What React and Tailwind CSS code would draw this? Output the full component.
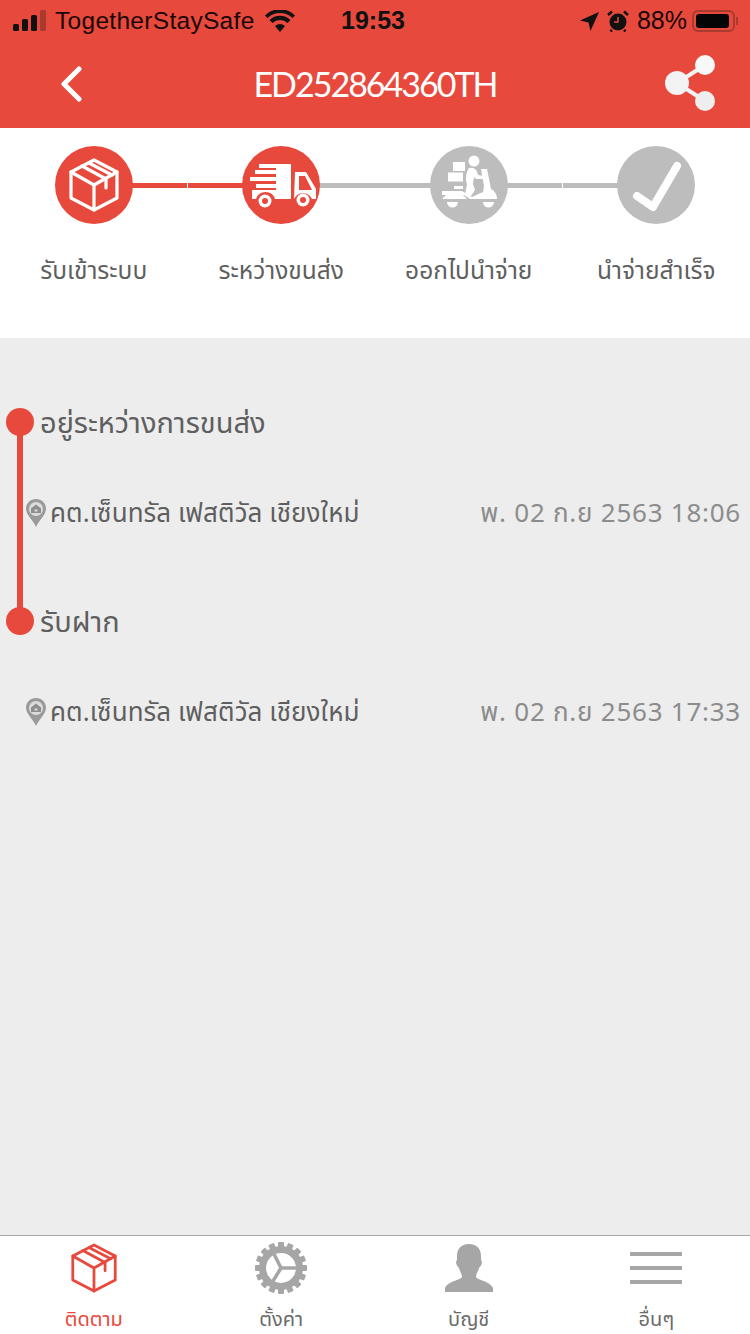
import React from "react";

const RED = "#e8493d";
const GREY = "#bdbdbd";

function BoxIcon({ color, className, sw = 3.2 }) {
  return (
    <svg viewBox="0 0 52 56" className={className} fill="none" stroke={color} strokeWidth={sw} strokeLinejoin="round" strokeLinecap="round">
      <path d="M26 3 L49 15 L49 41 L26 53 L3 41 L3 15 Z" />
      <path d="M3 15 L26 28 L49 15 M26 28 L26 53" />
      <path d="M14 9 L38 22 L38 31 M21 6 L44 18" />
    </svg>
  );
}

function Truck() {
  return (
    <svg viewBox="0 0 78 78" className="w-[78px] h-[78px]">
      <circle cx="39" cy="39" r="39" fill={RED} />
      <g fill="#fff">
        <path d="M17 18 H49 V53 H33 A10 10 0 0 0 14 53 H10 V44 H34 V42 H14 V38 H34 V35 H8 V31 H34 V28 H13 V24 H34 V22 H17 Z" />
        <path d="M53 26 H64 L74 43 V53 H70 A10 10 0 0 0 52 53 Z" />
      </g>
      <path d="M57 30 H63 L70 44 H57 Z" fill={RED} />
      <circle cx="23" cy="55" r="6.5" fill="#fff" />
      <circle cx="23" cy="55" r="3" fill={RED} />
      <circle cx="61" cy="54" r="6.5" fill="#fff" />
      <circle cx="61" cy="54" r="3" fill={RED} />
    </svg>
  );
}

function Scooter() {
  return (
    <svg viewBox="0 0 78 78" className="w-[78px] h-[78px]">
      <circle cx="39" cy="39" r="39" fill={GREY} />
      <g fill="#fff">
        <circle cx="44" cy="15" r="5.5" />
        <path d="M23 16 H35 V25 H23 Z M18 26.5 H33 V35.5 H18 Z" />
        <path d="M39 22 C45 21 47 24 48 29 L54 30 L54 33 L46 33 L44 31 L43 38 L45 44 L41 50 L35 49 L37 38 C35 34 36 26 39 22 Z" />
        <path d="M51 23 H57 L61 43 C65 45 67 49 67 53 H40 L34 49 H12 V45 H32 L42 51 L53 46 L54 40 Z" />
        <path d="M16 49 H33 L37 53 H12 Z M24 40 H33 V43 H24 Z" />
        <path d="M17 56 H28 A5.5 5.5 0 0 1 17 56 Z M53 56 H64 A5.5 5.5 0 0 1 53 56 Z" />
      </g>
    </svg>
  );
}

function Check() {
  return (
    <svg viewBox="0 0 78 78" className="w-[78px] h-[78px]">
      <circle cx="39" cy="39" r="39" fill={GREY} />
      <path d="M20 50 L36 61 L60 20" fill="none" stroke="#fff" strokeWidth="8" strokeLinecap="round" strokeLinejoin="round" />
    </svg>
  );
}

function Step({ icon, label, left, right, seam }) {
  return (
    <div className="flex flex-col items-center">
      <div className="relative w-full h-[78px] flex justify-center">
        {left && <div className="absolute left-0 w-[50%] top-[37px] h-[5px]" style={{ background: left }} />}
        {right && <div className={seam ? "absolute right-[1px] w-[50%] top-[37px] h-[5px]" : "absolute right-0 w-[50%] top-[37px] h-[5px]"} style={{ background: right }} />}
        <div className="relative">{icon}</div>
      </div>
      <div className="mt-[31px] text-[24.5px] leading-[34px] text-[#5f5f5f] whitespace-nowrap">{label}</div>
    </div>
  );
}

function Pin() {
  return (
    <svg viewBox="0 0 20 28" className="w-[20px] h-[28px] shrink-0">
      <path d="M10 0 C4.5 0 0 4.2 0 9.6 C0 16 6 20 10 28 C14 20 20 16 20 9.6 C20 4.2 15.5 0 10 0 Z" fill="#9a9a9a" />
      <circle cx="10" cy="10" r="7" fill="#dcdcdc" />
      <path d="M10 5.5 L15 9.5 V14 H5 V9.5 Z M8.5 10.5 V12.5 H11.5 V10.5 Z" fill="#8d8d8d" fillRule="evenodd" />
    </svg>
  );
}

function Event({ title, place, time }) {
  return (
    <div className="h-[199px]">
      <div className="flex items-center h-[40px]">
        <div className="w-[28px] h-[28px] rounded-full bg-[#e8493d] ml-[6px] shrink-0" />
        <div className="ml-[6px] text-[29px] leading-[40px] text-[#5f5f5f] relative top-[2px]">{title}</div>
      </div>
      <div className="flex items-center justify-between h-[40px] mt-[51px] pl-[26px] pr-[9px]">
        <div className="flex items-center gap-[4px]">
          <Pin />
          <span className="text-[26px] tracking-[0.07px] text-[#5f5f5f] leading-[40px] whitespace-nowrap relative top-[1px]">{place}</span>
        </div>
        <span className="text-[26px] tracking-[0.75px] text-[#8c8c8c] leading-[40px] whitespace-nowrap relative top-[1px]">{time}</span>
      </div>
    </div>
  );
}

function Gear() {
  const teeth = [];
  for (let i = 0; i < 16; i++) {
    const a = (i * 360) / 16;
    teeth.push(<rect key={i} x="23" y="0" width="6" height="8" rx="1" fill="#a6a6a6" transform={`rotate(${a} 26 26)`} />);
  }
  return (
    <svg viewBox="0 0 52 52" className="w-[52px] h-[52px]">
      {teeth}
      <circle cx="26" cy="26" r="18.5" fill="none" stroke="#a6a6a6" strokeWidth="7" />
      <path d="M26 26 L47 26 M26 26 L17 8 M26 26 L15 44" stroke="#a6a6a6" strokeWidth="3.5" fill="none" />
    </svg>
  );
}

function Person() {
  return (
    <svg viewBox="0 0 48 48" className="w-[48px] h-[48px]">
      <path fill="#a6a6a6" d="M24 0 C31 0 36 4 36 12 C36 15 36 17 37 18 C37 21 35 23 34 24 C33 28 31 30 31 33 C32 36 45 37 48 44 V48 H0 V44 C3 37 16 36 17 33 C17 30 15 28 14 24 C13 23 11 21 11 18 C12 17 12 15 12 12 C12 4 17 0 24 0 Z" />
    </svg>
  );
}

function NavItem({ icon, label, color = "#6b6b6b" }) {
  return (
    <div className="flex flex-col items-center">
      <div className="h-[58px] flex items-center justify-center">{icon}</div>
      <div className="text-[20px] leading-[24px] mt-[11px]" style={{ color }}>{label}</div>
    </div>
  );
}

export default function App() {
  return (
    <div
      className="w-[750px] h-[1334px] flex flex-col bg-[#ededed] overflow-hidden"
      style={{ fontFamily: '"Noto Sans Thai","Noto Sans","Lato","Liberation Sans",sans-serif' }}
    >
      <header className="bg-[#e8493d] h-[128px] shrink-0 flex flex-col">
        <div className="h-[42px] flex items-center justify-between pl-[13px] pr-[12px] text-[#1a0605]" style={{ fontFamily: '"Liberation Sans",sans-serif' }}>
          <div className="flex items-center w-[320px]">
            <svg viewBox="0 0 34 22" className="w-[34px] h-[22px]">
              <rect x="0" y="14" width="6" height="7" rx="1.5" fill="#111" />
              <rect x="9" y="9" width="6" height="12" rx="1.5" fill="#111" />
              <rect x="18" y="5" width="6" height="16" rx="1.5" fill="#111" />
              <rect x="27" y="0" width="6" height="21" rx="1.5" fill="#a83a30" />
            </svg>
            <span className="ml-[8px] text-[24.5px] tracking-[0.3px]">TogetherStaySafe</span>
            <svg viewBox="0 0 30 22" className="w-[30px] h-[22px] ml-[10px]">
              <path d="M15 22 L10 16 A8 8 0 0 1 20 16 Z M7.5 13 L4.5 10 A15 15 0 0 1 25.5 10 L22.5 13 A11 11 0 0 0 7.5 13 Z M2.5 8 L0 5.5 A21 21 0 0 1 30 5.5 L27.5 8 A18 18 0 0 0 2.5 8 Z" fill="#111" />
            </svg>
          </div>
          <span className="text-[25px] font-bold text-[#111] absolute left-[341px]">19:53</span>
          <div className="flex items-center">
            <svg viewBox="0 0 20 20" className="w-[19px] h-[19px]">
              <path d="M0 9 L20 0 L11 20 L9 11 Z" fill="#111" />
            </svg>
            <svg viewBox="0 0 22 22" className="w-[22px] h-[22px] ml-[8px]">
              <circle cx="11" cy="12" r="8.5" fill="#111" />
              <path d="M1 5 L5 1.5 M21 5 L17 1.5 M5 20 L3.5 21.5 M17 20 L18.5 21.5" stroke="#111" strokeWidth="2.5" />
              <path d="M11 7 V12 H7" stroke="#e8493d" strokeWidth="1.5" fill="none" />
            </svg>
            <span className="ml-[8px] text-[25px]">88%</span>
            <div className="ml-[5px] w-[43px] h-[22px] rounded-[6px] border-2 border-[#a83a30] p-[2px]">
              <div className="w-[33px] h-full bg-[#050505] rounded-[3px]" />
            </div>
            <div className="w-[2px] h-[8px] bg-[#a83a30] ml-[1px]" />
          </div>
        </div>
        <div className="flex-1 relative flex items-center justify-center pb-[3px]">
          <svg viewBox="0 0 24 36" className="absolute left-[59px] top-[24px] w-[24px] h-[36px]">
            <path d="M20 3 L5 18 L20 33" fill="none" stroke="#fff" strokeWidth="5" strokeLinecap="round" strokeLinejoin="round" />
          </svg>
          <span className="text-[34px] font-normal tracking-[-2px] text-white leading-[40px]" style={{ fontFamily: "Lato,sans-serif" }}>ED252864360TH</span>
          <svg viewBox="0 0 50 56" className="absolute left-[665px] top-[13px] w-[50px] h-[56px]">
            <path d="M12 28 L40 10 M12 28 L40 46" stroke="#f3f3f3" strokeWidth="4" />
            <circle cx="12" cy="28" r="12" fill="#f3f3f3" />
            <circle cx="40" cy="10" r="10" fill="#f8f8f8" />
            <circle cx="40" cy="46" r="10" fill="#eeeeee" />
          </svg>
        </div>
      </header>

      <section className="bg-white h-[210px] shrink-0 grid grid-cols-4 content-start pt-[18px]">
        <Step
          right={RED}
          seam
          label="รับเข้าระบบ"
          icon={
            <div className="w-[78px] h-[78px] rounded-full bg-[#e8493d] flex items-center justify-center">
              <BoxIcon color="#fff" className="w-[52px] h-[56px]" />
            </div>
          }
        />
        <Step left={RED} right={GREY} label="ระหว่างขนส่ง" icon={<Truck />} />
        <Step left={GREY} right={GREY} seam label="ออกไปนำจ่าย" icon={<Scooter />} />
        <Step left={GREY} label="นำจ่ายสำเร็จ" icon={<Check />} />
      </section>

      <main className="flex-1 relative pt-[64px]">
        <div className="absolute left-[17px] top-[83px] w-[6px] h-[199px] bg-[#e8493d]" />
        <div className="relative">
          <Event title="อยู่ระหว่างการขนส่ง" place="คต.เซ็นทรัล เฟสติวัล เชียงใหม่" time="พ. 02 ก.ย 2563 18:06" />
          <Event title="รับฝาก" place="คต.เซ็นทรัล เฟสติวัล เชียงใหม่" time="พ. 02 ก.ย 2563 17:33" />
        </div>
      </main>

      <nav className="h-[99px] shrink-0 bg-white border-t border-[#a8a8a8] grid grid-cols-4 pt-[3px]">
        <NavItem color={RED} label="ติดตาม" icon={<BoxIcon color={RED} className="w-[48px] h-[52px]" sw={3} />} />
        <NavItem label="ตั้งค่า" icon={<Gear />} />
        <NavItem label="บัญชี" icon={<Person />} />
        <NavItem
          label="อื่นๆ"
          icon={
            <div className="w-[52px] flex flex-col gap-[10px]">
              <div className="h-[4px] bg-[#a6a6a6]" />
              <div className="h-[4px] bg-[#a6a6a6]" />
              <div className="h-[4px] bg-[#a6a6a6]" />
            </div>
          }
        />
      </nav>
    </div>
  );
}
